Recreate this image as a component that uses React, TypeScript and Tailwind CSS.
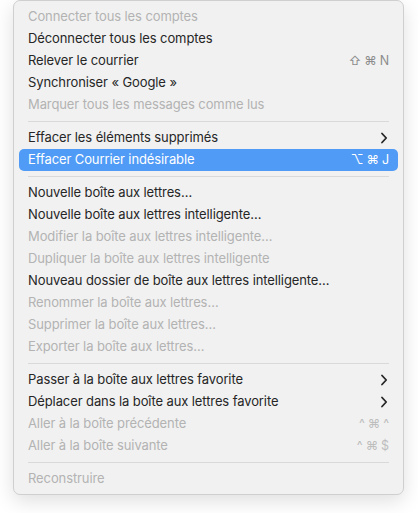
import React from "react";

type Item =
  | { sep: true }
  | {
      sep?: false;
      label: string;
      disabled?: boolean;
      active?: boolean;
      keys?: string[];
      sub?: boolean;
    };

const items: Item[] = [
  { label: "Connecter tous les comptes", disabled: true },
  { label: "Déconnecter tous les comptes" },
  { label: "Relever le courrier", keys: ["⇧", "⌘", "N"] },
  { label: "Synchroniser « Google »" },
  { label: "Marquer tous les messages comme lus", disabled: true },
  { sep: true },
  { label: "Effacer les éléments supprimés", sub: true },
  { label: "Effacer Courrier indésirable", active: true, keys: ["⌥", "⌘", "J"] },
  { sep: true },
  { label: "Nouvelle boîte aux lettres…" },
  { label: "Nouvelle boîte aux lettres intelligente…" },
  { label: "Modifier la boîte aux lettres intelligente…", disabled: true },
  { label: "Dupliquer la boîte aux lettres intelligente", disabled: true },
  { label: "Nouveau dossier de boîte aux lettres intelligente…" },
  { label: "Renommer la boîte aux lettres…", disabled: true },
  { label: "Supprimer la boîte aux lettres…", disabled: true },
  { label: "Exporter la boîte aux lettres…", disabled: true },
  { sep: true },
  { label: "Passer à la boîte aux lettres favorite", sub: true },
  { label: "Déplacer dans la boîte aux lettres favorite", sub: true },
  { label: "Aller à la boîte précédente", disabled: true, keys: ["^", "⌘", "^"] },
  { label: "Aller à la boîte suivante", disabled: true, keys: ["^", "⌘", "$"] },
  { sep: true },
  { label: "Reconstruire", disabled: true },
];

function Chevron() {
  return (
    <svg width="8" height="12" viewBox="0 0 8 12" className="text-[#262626]">
      <path d="M2 1.5 L6.2 6 L2 10.5" fill="none" stroke="currentColor" strokeWidth="1.8" strokeLinecap="round" strokeLinejoin="round" />
    </svg>
  );
}

export default function App() {
  return (
    <div className="w-[418px] h-[513px] bg-white" style={{ fontFamily: "Inter, 'Noto Sans', sans-serif" }}>
      <div className="ml-[13px] w-[391px] pt-[5px] pb-[4px] px-[5px] bg-[#f1f1f1] rounded-[7px] border border-[#cfcfcf] shadow-[0_6px_20px_rgba(0,0,0,0.13)]">
        {items.map((it, i) => {
          if (it.sep) {
            return (
              <div key={i} className="h-[11px] flex items-center px-[9px]">
                <div className="h-px w-full bg-[#d9d9d9]" />
              </div>
            );
          }
          const color = it.active ? "text-white" : it.disabled ? "text-[#b3b3b3]" : "text-[#262626]";
          const keyColor = it.active ? "text-white" : it.disabled ? "text-[#bdbdbd]" : "text-[#8c8c8c]";
          return (
            <div
              key={i}
              className={`h-[22px] flex items-center justify-between pl-[9px] pr-[9px] rounded-[5px] text-[13px] tracking-[-0.1px] ${color} ${it.active ? "bg-[#4f9bf6]" : ""}`}
            >
              <span className="whitespace-nowrap">{it.label}</span>
              {it.keys && (
                <span className={`flex items-center gap-[3px] text-[12.5px] ${keyColor}`}>
                  {it.keys.map((k, j) => (
                    <span key={j}>{k}</span>
                  ))}
                </span>
              )}
              {it.sub && (
                <span className="pr-[1px] flex items-center">
                  <Chevron />
                </span>
              )}
            </div>
          );
        })}
      </div>
    </div>
  );
}
